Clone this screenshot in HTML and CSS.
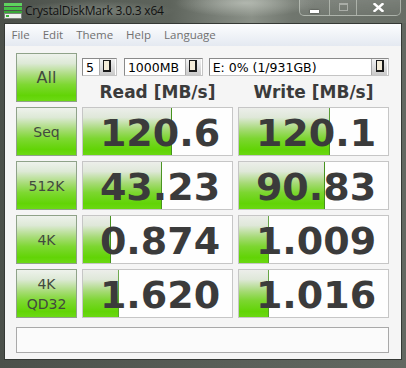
FILE: index.html
```html
<!DOCTYPE html>
<html lang="en">
<head>
  <meta charset="UTF-8" />
  <title>CrystalDiskMark 3.0.3 x64</title>
  <link rel="stylesheet" href="styles.css">
</head>
<body>
  <div class="titlebar">
    <svg class="app-icon" width="18" height="16" viewBox="0 0 18 16">
      <rect x="0" y="0" width="18" height="3" fill="#5fd35f"/>
      <rect x="0" y="4" width="18" height="3" fill="#44c044"/>
      <rect x="0" y="8" width="18" height="2" fill="#38a838"/>
      <rect x="0.5" y="10.5" width="17" height="5" fill="#eef0ee" stroke="#7d837d"/>
      <rect x="2" y="12" width="3" height="2" fill="#38b038"/>
    </svg>
    <span class="title">CrystalDiskMark 3.0.3 x64</span>
    <div class="caption">
      <span class="cap cap-min"></span>
      <span class="cap cap-max"></span>
      <span class="cap cap-close">
        <svg width="11" height="9" viewBox="0 0 11 9"><path d="M1.5 1 L9.5 8 M9.5 1 L1.5 8" stroke="#fff" stroke-width="2.4" stroke-linecap="square"/></svg>
      </span>
    </div>
  </div>

  <div class="frame">
    <div class="menubar">
      <span>File</span>
      <span>Edit</span>
      <span>Theme</span>
      <span>Help</span>
      <span>Language</span>
    </div>

    <div class="client">
      <div class="label label-all">All</div>
      <div class="combos">
        <div class="combo combo-count"><span class="combo-text">5</span><span class="drop"></span></div>
        <div class="combo combo-size"><span class="combo-text">1000MB</span><span class="drop"></span></div>
        <div class="combo combo-drive"><span class="combo-text">E: 0% (1/931GB)</span><span class="drop"></span></div>
      </div>
      <div class="head">Read [MB/s]</div>
      <div class="head">Write [MB/s]</div>

      <div class="label">Seq</div>
      <div class="cell" style="--fill: 60%">120.6</div>
      <div class="cell" style="--fill: 61%">120.1</div>

      <div class="label">512K</div>
      <div class="cell" style="--fill: 53%">43.23</div>
      <div class="cell" style="--fill: 58%">90.83</div>

      <div class="label">4K</div>
      <div class="cell" style="--fill: 19%">0.874</div>
      <div class="cell" style="--fill: 20%">1.009</div>

      <div class="label">4K<br>QD32</div>
      <div class="cell" style="--fill: 24%">1.620</div>
      <div class="cell" style="--fill: 20%">1.016</div>

      <div class="status"></div>
    </div>
  </div>
</body>
</html>
```

FILE: styles.css
```css
:root {
  --ink: #3b3b3b;
  --label-ink: #424a3e;
}
body {
  margin: 0;
  width: 406px;
  height: 368px;
  overflow: hidden;
  background: linear-gradient(90deg, #4b504a, #5a6059 60%, #626861);
  font-family: "DejaVu Sans", sans-serif;
}

/* window title (aero glass) */
.titlebar {
  height: 23px;
  display: flex;
  align-items: flex-start;
  background:
    radial-gradient(ellipse 70px 14px at 245px 3px, rgba(205,210,202,.6), transparent),
    radial-gradient(ellipse 80px 10px at 95px 11px, rgba(150,156,148,.55), transparent),
    linear-gradient(90deg, #4a4f49 0%, #575d56 22%, #5e645c 42%, #7a8078 54%, #8a9087 62%, #70766e 72%, #676d65 100%);
}
.app-icon { margin: 3px 0 0 4px; flex: none; }
.title {
  margin: 2px 0 0 3px;
  font: 12px/18px "Open Sans", sans-serif;
  letter-spacing: -.2px;
  color: #111;
}
.caption { margin-left: auto; margin-right: 5px; display: flex; height: 16px; }
.cap {
  display: flex;
  align-items: center;
  justify-content: center;
  border: 1px solid rgba(215,220,212,.55);
  border-top: none;
  background: linear-gradient(rgba(255,255,255,.12), rgba(255,255,255,.04));
}
.cap-min { width: 29px; border-radius: 0 0 0 5px; }
.cap-max { width: 26px; border-left: none; }
.cap-close { width: 43px; border-left: none; border-radius: 0 0 5px 0; }
.cap-min::after {
  content: "";
  width: 9px;
  height: 3px;
  margin-top: 7px;
  background: #fff;
  box-shadow: 0 0 2px rgba(0,0,0,.6);
}
.cap-max::after {
  content: "";
  width: 7px;
  height: 5px;
  margin-top: -2px;
  border: 1px solid #a9ada7;
  border-top-width: 2px;
}

/* window body */
.frame {
  margin: 0 4px;
  border: 1px solid #353935;
}
.menubar {
  height: 22px;
  display: flex;
  background: linear-gradient(#fcfdfe, #e4e9f1);
  font: 11.5px/22px "Open Sans", sans-serif;
  color: #707070;
}
.menubar span { padding: 0 6.5px; }

.client {
  background: #f5f5f5;
  padding: 7px 11px 6px;
  display: grid;
  grid-template-columns: 61px 151px 151px;
  grid-template-rows: 23px 21px repeat(4, 49px) 30px;
  gap: 5px;
}

.label {
  box-sizing: border-box;
  display: flex;
  align-items: center;
  justify-content: center;
  text-align: center;
  border: 1px solid #8fa289;
  background: linear-gradient(#eef2ec 0%, #dde9d6 20%, #a8dc78 45%, #7ed832 65%, #62d406 88%, #6cda14 100%);
  font-size: 14px;
  line-height: 20px;
  color: var(--label-ink);
}
.label-all { grid-row: span 2; font-size: 16px; }

.combos {
  grid-column: 2 / 4;
  align-self: end;
  display: flex;
  gap: 7px;
}
.combo {
  box-sizing: border-box;
  height: 18px;
  display: flex;
  align-items: center;
  background: #fff;
  border: 1px solid;
  border-color: #8a8a8a #c4c4c4 #c4c4c4 #8a8a8a;
  font-size: 12.5px;
  color: #000;
}
.combo-count { width: 35px; }
.combo-size { width: 79px; }
.combo-drive { width: 181px; margin-left: -1px; }
.combo-text { flex: 1; padding-left: 3px; white-space: nowrap; }
.drop {
  align-self: stretch;
  width: 15px;
  margin-right: 1px;
  display: flex;
  align-items: center;
  justify-content: center;
  background: linear-gradient(#f2f2f2, #c9c9c9);
  border-left: 1px solid #a8a8a8;
}
.drop::after {
  content: "";
  width: 5px;
  height: 9px;
  margin-top: -2px;
  background: #f4ecd8;
  border: 1px solid #1a1a1a;
  border-right-width: 2px;
  border-bottom-width: 2px;
}

.head {
  padding-top: 2px;
  text-align: center;
  font-weight: bold;
  font-size: 17px;
  line-height: 19px;
  color: var(--ink);
}

.cell {
  box-sizing: border-box;
  border: 1px solid #c6c6c6;
  background-color: #fefefe;
  background-image:
    linear-gradient(90deg, transparent calc(100% - 1px), #46921e calc(100% - 1px)),
    linear-gradient(#eceeea 0%, #dfe8d9 20%, #a6da76 45%, #7cd630 65%, #62d406 88%, #6ad812 100%);
  background-size: var(--fill) 100%;
  background-repeat: no-repeat;
  padding: 4px 0 0 5px;
  text-align: center;
  font-weight: bold;
  font-size: 38px;
  line-height: 43px;
  color: var(--ink);
}

.status {
  grid-column: 1 / 4;
  margin-top: 4px;
  border: 1px solid #a9a9a9;
  background: #fbfbfb;
}
```
